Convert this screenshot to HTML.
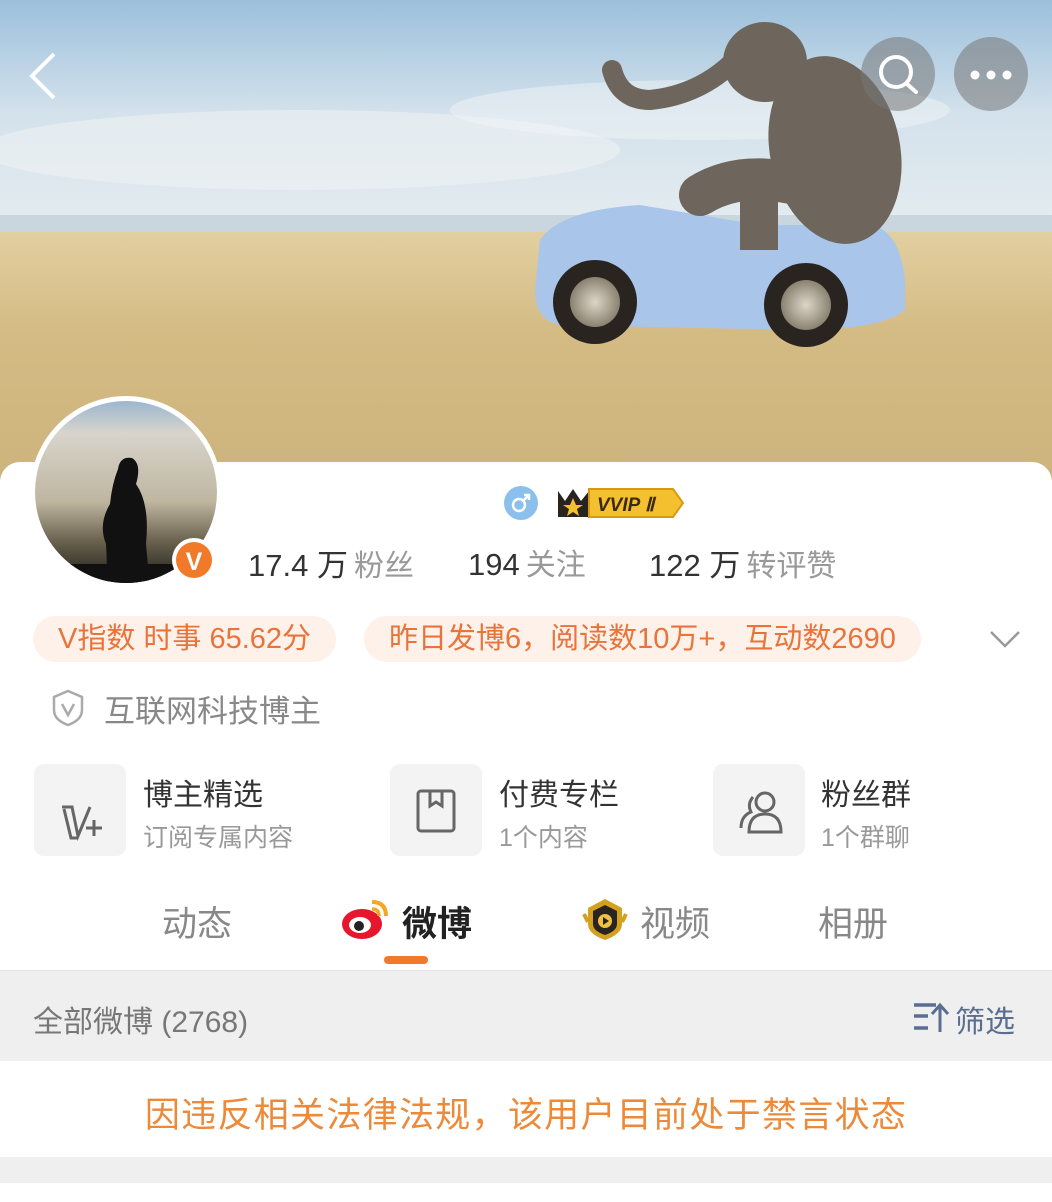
<!DOCTYPE html>
<html><head><meta charset="utf-8"><style>
body{margin:0;width:1052px;height:1200px;overflow:hidden;background:#fff;font-family:"Liberation Sans","Noto Sans CJK SC",sans-serif;position:relative}
.abs{position:absolute}
.pill{position:absolute;top:616px;height:46px;border-radius:23px;background:#fdf1ea;color:#e8743a;font-size:29px;line-height:46px;padding:0 25px;white-space:nowrap}
.stat{position:absolute;top:540px;font-size:31px;color:#333;white-space:nowrap}
.stat span{color:#999;font-size:30px;margin-left:6px}
.box{position:absolute;top:764px;width:92px;height:92px;border-radius:10px;background:#f3f3f3}
.t1{position:absolute;top:770px;font-size:30px;color:#333}
.t2{position:absolute;top:818px;font-size:25px;color:#999}
.tab{position:absolute;top:896px;font-size:35px;color:#888}
</style></head><body>
<svg class="abs" style="left:0;top:0" width="1052" height="480" viewBox="0 0 1052 480">
<defs>
<linearGradient id="sky" x1="0" y1="0" x2="0" y2="1"><stop offset="0" stop-color="#9cc0dc"/><stop offset=".5" stop-color="#d4e2ec"/><stop offset="1" stop-color="#e4ecf0"/></linearGradient>
<linearGradient id="sand" x1="0" y1="0" x2="0" y2="1"><stop offset="0" stop-color="#e2cfa0"/><stop offset=".4" stop-color="#d4bb84"/><stop offset="1" stop-color="#cdb37c"/></linearGradient>
<radialGradient id="wh"><stop offset="0" stop-color="#ddd6c8"/><stop offset="1" stop-color="#8a8270"/></radialGradient>
</defs>
<rect width="1052" height="230" fill="url(#sky)"/>
<ellipse cx="300" cy="150" rx="320" ry="40" fill="#eef2f4" opacity=".6"/>
<ellipse cx="700" cy="110" rx="250" ry="30" fill="#f0f3f5" opacity=".5"/>
<rect y="215" width="1052" height="20" fill="#c9d6de"/>
<rect y="232" width="1052" height="250" fill="url(#sand)"/>
<path d="M540 240 Q560 210 640 205 L700 215 L760 225 L870 225 Q900 230 905 280 L905 310 Q880 330 800 330 L560 325 Q535 320 535 290 Z" fill="#a9c6ea"/>
<circle cx="595" cy="302" r="42" fill="#2a2420"/><circle cx="595" cy="302" r="25" fill="url(#wh)"/>
<circle cx="806" cy="305" r="42" fill="#2a2420"/><circle cx="806" cy="305" r="25" fill="url(#wh)"/>
<g fill="#6e655c">
<ellipse cx="835" cy="150" rx="65" ry="95" transform="rotate(-12 835 150)"/>
<ellipse cx="765" cy="62" rx="42" ry="40"/>
<path d="M735 60 Q700 95 650 100 Q620 100 612 70" fill="none" stroke="#6e655c" stroke-width="20" stroke-linecap="round"/>
<path d="M800 185 Q740 170 700 195" fill="none" stroke="#6e655c" stroke-width="42" stroke-linecap="round"/>
<rect x="740" y="180" width="38" height="70"/>
</g>
<polyline points="54,54 32,76 54,98" fill="none" stroke="#fff" stroke-width="4"/>
<circle cx="898" cy="74" r="37" fill="#777" opacity=".55"/>
<circle cx="896" cy="72" r="15" fill="none" stroke="#fff" stroke-width="4"/>
<line x1="907" y1="84" x2="916" y2="92" stroke="#fff" stroke-width="4" stroke-linecap="round"/>
<circle cx="991" cy="74" r="37" fill="#777" opacity=".55"/>
<circle cx="975" cy="75" r="4.5" fill="#fff"/><circle cx="991" cy="75" r="4.5" fill="#fff"/><circle cx="1007" cy="75" r="4.5" fill="#fff"/>
</svg>
<div class="abs" style="left:0;top:462px;width:1052px;height:740px;background:#fff;border-radius:20px 20px 0 0"></div>
<svg class="abs" style="left:28px;top:394px" width="196" height="196">
<defs><clipPath id="av"><circle cx="98" cy="98" r="91"/></clipPath>
<linearGradient id="ag" x1="0" y1="0" x2="0" y2="1"><stop offset="0" stop-color="#8fb0d0"/><stop offset=".2" stop-color="#d8d4cc"/><stop offset=".55" stop-color="#bfb6a0"/><stop offset=".75" stop-color="#6a624e"/><stop offset="1" stop-color="#111"/></linearGradient></defs>
<circle cx="98" cy="98" r="96" fill="#fff"/>
<g clip-path="url(#av)"><rect width="196" height="196" fill="url(#ag)"/>
<path d="M80 196 L78 150 Q70 130 82 110 Q84 90 90 75 Q92 62 104 64 Q114 70 108 90 Q122 110 118 150 L122 196Z" fill="#111"/>
<rect y="170" width="196" height="30" fill="#111"/></g>
<circle cx="166" cy="166" r="22" fill="#fff"/><circle cx="166" cy="166" r="18" fill="#f07a2a"/>
<text x="166" y="176" font-size="25" font-weight="bold" fill="#fff" text-anchor="middle" font-family="Liberation Sans">V</text>
</svg>
<svg class="abs" style="left:503px;top:483px" width="185" height="40">
<circle cx="18" cy="20" r="17" fill="#8cc0ec"/>
<circle cx="16" cy="22" r="6" fill="none" stroke="#fff" stroke-width="2.5"/><path d="M20 18 L26 12 M21 12 H26 V17" stroke="#fff" stroke-width="2.5" fill="none"/>
<path d="M55 8 L62 18 L70 6 L78 18 L86 8 L86 34 L55 34Z" fill="#2a2420"/>
<polygon points="70,15 73,22 80,22 74,26 76,33 70,29 64,33 66,26 60,22 67,22" fill="#f5c030"/>
<path d="M86 6 H170 L180 20 L170 34 H86Z" fill="#f5c030" stroke="#d89a10" stroke-width="2"/>
<text x="94" y="28" font-size="19" font-weight="bold" font-style="italic" fill="#3a2a10" font-family="Liberation Sans">VVIP Ⅱ</text>
</svg>
<div class="stat" style="left:248px">17.4 万<span>粉丝</span></div>
<div class="stat" style="left:468px">194<span>关注</span></div>
<div class="stat" style="left:649px">122 万<span>转评赞</span></div>
<div class="pill" style="left:33px">V指数 时事 65.62分</div>
<div class="pill" style="left:364px">昨日发博6，阅读数10万+，互动数2690</div>
<svg class="abs" style="left:988px;top:628px" width="34" height="22"><polyline points="3,4 17,18 31,4" fill="none" stroke="#999" stroke-width="2.5"/></svg>
<svg class="abs" style="left:50px;top:688px" width="36" height="40"><path d="M18 3 L32 9 V22 Q32 32 18 37 Q4 32 4 22 V9Z" fill="none" stroke="#aaa" stroke-width="2.5"/><polyline points="12,16 18,27 24,16" fill="none" stroke="#aaa" stroke-width="2.5"/></svg>
<div class="abs" style="left:104px;top:686px;font-size:31px;color:#888">互联网科技博主</div>
<div class="box" style="left:34px"></div>
<div class="box" style="left:390px"></div>
<div class="box" style="left:713px"></div>
<svg class="abs" style="left:34px;top:764px" width="92" height="92"><path d="M28 43 H38 L44 72 L56 43 M30 45 L37 74 H44" fill="none" stroke="#666" stroke-width="3"/><path d="M60 56 V72 M52 64 H68" stroke="#666" stroke-width="3"/></svg>
<svg class="abs" style="left:390px;top:764px" width="92" height="92"><rect x="28" y="27" width="36" height="40" rx="3" fill="none" stroke="#666" stroke-width="3"/><path d="M40 27 V42 L46 38 L52 42 V27" fill="none" stroke="#666" stroke-width="3"/></svg>
<svg class="abs" style="left:713px;top:764px" width="92" height="92"><circle cx="52" cy="38" r="9" fill="none" stroke="#666" stroke-width="3"/><path d="M36 68 Q36 50 52 50 Q68 50 68 68Z" fill="none" stroke="#666" stroke-width="3"/><path d="M40 33 Q34 40 38 48 Q28 52 28 64" fill="none" stroke="#666" stroke-width="3"/></svg>
<div class="t1" style="left:143px">博主精选</div><div class="t2" style="left:143px">订阅专属内容</div>
<div class="t1" style="left:499px">付费专栏</div><div class="t2" style="left:499px">1个内容</div>
<div class="t1" style="left:821px">粉丝群</div><div class="t2" style="left:821px">1个群聊</div>
<div class="tab" style="left:162px">动态</div>
<svg class="abs" style="left:340px;top:896px" width="52" height="46"><ellipse cx="22" cy="28" rx="20" ry="15" fill="#e6162d"/><ellipse cx="20" cy="29" rx="11" ry="8" fill="#fff"/><circle cx="19" cy="30" r="5" fill="#222"/><path d="M32 6 Q46 6 46 20" fill="none" stroke="#f5a623" stroke-width="4"/><path d="M32 13 Q39 13 39 20" fill="none" stroke="#f5a623" stroke-width="3.5"/></svg>
<div class="tab" style="left:402px;color:#222;font-weight:bold">微博</div>
<div class="abs" style="left:384px;top:956px;width:44px;height:8px;border-radius:4px;background:#f07a2a"></div>
<svg class="abs" style="left:580px;top:896px" width="50" height="46"><path d="M25 3 L42 12 V28 Q42 38 25 44 Q8 38 8 28 V12Z" fill="#d4a020"/><path d="M25 9 L37 15 V28 Q37 35 25 39 Q13 35 13 28 V15Z" fill="#2a2420"/><circle cx="25" cy="25" r="7" fill="#f0c040"/><polygon points="23,21 29,25 23,29" fill="#2a2420"/><path d="M4 18 L8 26 M46 18 L42 26" stroke="#d4a020" stroke-width="4"/></svg>
<div class="tab" style="left:640px">视频</div>
<div class="tab" style="left:818px">相册</div>
<div class="abs" style="left:0;top:970px;width:1052px;height:90px;background:#efefef;border-top:1px solid #e4e4e4"></div>
<div class="abs" style="left:33px;top:997px;font-size:30px;color:#777">全部微博 (2768)</div>
<svg class="abs" style="left:912px;top:1000px" width="38" height="34"><path d="M2 5 H24 M2 16 H16 M2 28 H16" stroke="#5a6e90" stroke-width="3.5"/><path d="M28 32 V6 M20 14 L28 5 L36 14" fill="none" stroke="#5a6e90" stroke-width="3"/></svg>
<div class="abs" style="left:955px;top:997px;font-size:30px;color:#5a6e90">筛选</div>
<div class="abs" style="left:0;top:1087px;width:1052px;text-align:center;font-size:35px;color:#ec8a3a;letter-spacing:1.3px">因违反相关法律法规，该用户目前处于禁言状态</div>
<div class="abs" style="left:0;top:1157px;width:1052px;height:26px;background:#efefef"></div>
</body></html>
